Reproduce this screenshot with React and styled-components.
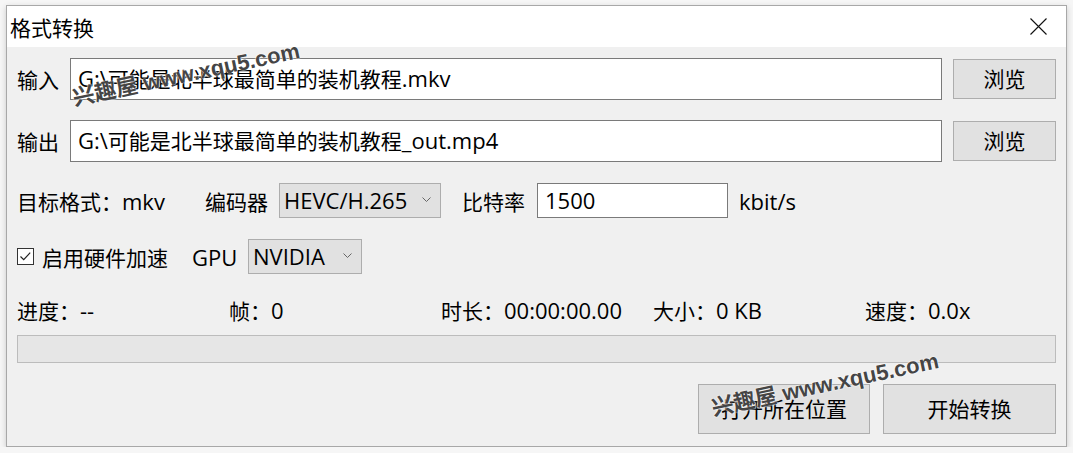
import React from "react";
import styled, { createGlobalStyle } from "styled-components";

const Global = createGlobalStyle`
  body {
    margin: 0;
    background: #f6f6f6;
    font-family: "Open Sans", "Noto Sans CJK SC", sans-serif;
    color: #000;
  }
`;

const Window = styled.div`
  position: relative;
  margin: 5px 0 0 6px;
  width: 1059px;
  height: 440px;
  border: 1px solid #a8a8a8;
  background: #f0f0f0;
  box-shadow: 0 2px 6px rgba(0, 0, 0, 0.18);
  display: flex;
  flex-direction: column;
  overflow: hidden;
`;

const TitleBar = styled.div`
  height: 41px;
  background: #fff;
  display: flex;
  align-items: center;
  justify-content: space-between;
  padding: 0 19px 0 3px;
  font-size: 21px;
`;

const Close = styled.div`
  width: 17px;
  height: 17px;
  display: flex;
`;

const Body = styled.div`
  flex: 1;
  padding: 11px 10px 0 10px;
  display: flex;
  flex-direction: column;
  font-size: 21px;
`;

/* latin runs are a touch larger in the original UI font */
const En = styled.span`
  font-size: 22px;
`;

const Row = styled.div`
  display: flex;
  align-items: center;
  height: ${(p) => p.h || 42}px;
  margin-bottom: ${(p) => p.mb || 0}px;
`;

const Label = styled.span`
  flex: none;
  width: ${(p) => (p.w ? `${p.w}px` : "auto")};
  white-space: nowrap;
`;

const TextField = styled.div`
  box-sizing: border-box;
  height: ${(p) => p.h || 42}px;
  width: ${(p) => (p.w ? `${p.w}px` : "auto")};
  flex: ${(p) => (p.w ? "none" : 1)};
  background: #fff;
  border: 1px solid #7a7a7a;
  padding: 0 7px 2px;
  display: flex;
  align-items: center;
  white-space: nowrap;
  margin-right: ${(p) => p.mr || 0}px;
`;

const Button = styled.div`
  box-sizing: border-box;
  width: ${(p) => p.w}px;
  height: ${(p) => p.h}px;
  background: #e1e1e1;
  border: 1px solid #adadad;
  display: flex;
  align-items: center;
  justify-content: center;
  margin-left: ${(p) => p.ml || 0}px;
  padding-bottom: 2px;
`;

const Select = styled.div`
  box-sizing: border-box;
  flex: none;
  width: ${(p) => p.w}px;
  height: 35px;
  background: #e1e1e1;
  border: 1px solid #adadad;
  display: flex;
  align-items: center;
  justify-content: space-between;
  padding: 0 9px 2px 4px;
  margin-right: ${(p) => p.mr || 0}px;
`;

const Check = styled.div`
  box-sizing: border-box;
  flex: none;
  width: 17px;
  height: 17px;
  border: 1px solid #333;
  background: #fff;
  margin-right: 8px;
  display: flex;
`;

const Stats = styled.div`
  display: grid;
  grid-template-columns: repeat(5, 212px);
  height: 28px;
  align-items: center;
  margin-top: -2px;
  margin-bottom: 12px;
`;

const Progress = styled.div`
  box-sizing: border-box;
  height: 28px;
  background: #e6e6e6;
  border: 1px solid #bcbcbc;
  margin-bottom: 21px;
`;

const Actions = styled.div`
  display: flex;
  justify-content: flex-end;
  gap: 13px;
`;

const Mark = styled.div`
  position: absolute;
  left: ${(p) => p.x}px;
  top: ${(p) => p.y}px;
  line-height: 1;
  transform: rotate(-12deg);
  transform-origin: left center;
  font-family: "Liberation Sans", "Noto Sans CJK SC", sans-serif;
  font-weight: bold;
  font-size: 22px;
  color: rgba(35, 35, 35, 0.85);
  text-shadow: 0 0 2px #fff, 0 0 1px #fff;
  white-space: nowrap;
  pointer-events: none;
`;

const Chevron = () => (
  <svg width="9" height="5" viewBox="0 0 9 5">
    <path d="M0.5 0.5l4 4 4-4" fill="none" stroke="#666" strokeWidth="1" />
  </svg>
);

export default function App() {
  return (
    <>
      <Global />
      <Window>
        <TitleBar>
          <span>格式转换</span>
          <Close>
            <svg width="17" height="17" viewBox="0 0 17 17">
              <path d="M0.5 0.5l16 16M16.5 0.5l-16 16" stroke="#111" strokeWidth="1.1" />
            </svg>
          </Close>
        </TitleBar>
        <Body>
          <Row mb={20}>
            <Label w={53}>输入</Label>
            <TextField>
              <En>G:\</En>可能是北半球最简单的装机教程<En>.mkv</En>
            </TextField>
            <Button w={103} h={40} ml={11}>浏览</Button>
          </Row>
          <Row mb={21}>
            <Label w={53}>输出</Label>
            <TextField>
              <En>G:\</En>可能是北半球最简单的装机教程<En>_out.mp4</En>
            </TextField>
            <Button w={103} h={40} ml={11}>浏览</Button>
          </Row>
          <Row h={35} mb={21}>
            <Label w={188}>
              目标格式：<En>mkv</En>
            </Label>
            <Label w={74}>编码器</Label>
            <Select w={162} mr={21}>
              <En>HEVC/H.265</En>
              <Chevron />
            </Select>
            <Label w={75}>比特率</Label>
            <TextField w={191} h={35} mr={11}>
              <En>1500</En>
            </TextField>
            <Label>
              <En>kbit/s</En>
            </Label>
          </Row>
          <Row h={35} mb={23}>
            <Check>
              <svg width="15" height="15" viewBox="0 0 15 15">
                <path d="M2.5 7.5l3.2 3.2 6.5-7" fill="none" stroke="#222" strokeWidth="1.2" />
              </svg>
            </Check>
            <Label w={150}>启用硬件加速</Label>
            <Label w={56}>
              <En>GPU</En>
            </Label>
            <Select w={114}>
              <En>NVIDIA</En>
              <Chevron />
            </Select>
          </Row>
          <Stats>
            <span>
              进度：<En>--</En>
            </span>
            <span>
              帧：<En>0</En>
            </span>
            <span>
              时长：<En>00:00:00.00</En>
            </span>
            <span>
              大小：<En>0 KB</En>
            </span>
            <span>
              速度：<En>0.0x</En>
            </span>
          </Stats>
          <Progress />
          <Actions>
            <Button w={172} h={50}>打开所在位置</Button>
            <Button w={173} h={50}>开始转换</Button>
          </Actions>
        </Body>
        <Mark x={66} y={82}>兴趣屋 www.xqu5.com</Mark>
        <Mark x={705} y={392}>兴趣屋 www.xqu5.com</Mark>
      </Window>
    </>
  );
}
